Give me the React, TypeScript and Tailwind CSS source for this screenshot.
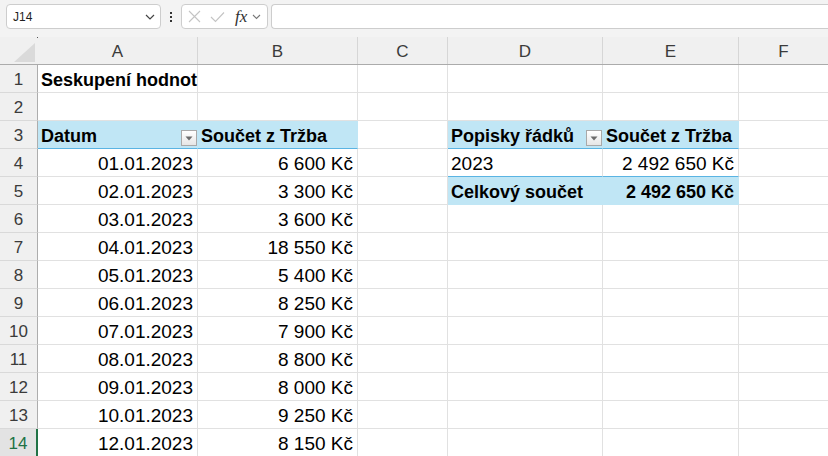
import React from "react";

type Cell = {
  text?: string;
  right?: boolean;
  bold?: boolean;
  fill?: boolean;
  blueBottom?: boolean;
  filter?: boolean;
};

const widths = ["w-[160px]", "w-[160px]", "w-[90px]", "w-[155px]", "w-[136px]", "w-[90px]"];
const letters = ["A", "B", "C", "D", "E", "F"];

const data: [string, string][] = [
  ["01.01.2023", "6\u00a0600 Kč"],
  ["02.01.2023", "3\u00a0300 Kč"],
  ["03.01.2023", "3\u00a0600 Kč"],
  ["04.01.2023", "18\u00a0550 Kč"],
  ["05.01.2023", "5\u00a0400 Kč"],
  ["06.01.2023", "8\u00a0250 Kč"],
  ["07.01.2023", "7\u00a0900 Kč"],
  ["08.01.2023", "8\u00a0800 Kč"],
  ["09.01.2023", "8\u00a0000 Kč"],
  ["10.01.2023", "9\u00a0250 Kč"],
  ["12.01.2023", "8\u00a0150 Kč"],
];

const buildRows = (): Cell[][] => {
  const rows: Cell[][] = [];
  rows.push([{ text: "Seskupení hodnot", bold: true }, {}, {}, {}, {}, {}]);
  rows.push([{}, {}, {}, {}, {}, {}]);
  rows.push([
    { text: "Datum", bold: true, fill: true, blueBottom: true, filter: true },
    { text: "Součet z Tržba", bold: true, fill: true, blueBottom: true },
    {},
    { text: "Popisky řádků", bold: true, fill: true, blueBottom: true, filter: true },
    { text: "Součet z Tržba", bold: true, fill: true, blueBottom: true },
    {},
  ]);
  data.forEach(([d, v], i) => {
    const row: Cell[] = [{ text: d, right: true }, { text: v, right: true }, {}];
    if (i === 0) {
      row.push({ text: "2023", blueBottom: true }, { text: "2\u00a0492\u00a0650 Kč", right: true, blueBottom: true });
    } else if (i === 1) {
      row.push(
        { text: "Celkový součet", bold: true, fill: true },
        { text: "2\u00a0492\u00a0650 Kč", bold: true, right: true, fill: true }
      );
    } else {
      row.push({}, {});
    }
    row.push({});
    rows.push(row);
  });
  return rows;
};

const FilterButton = () => (
  <div className="absolute right-0 bottom-[2px] w-[16px] h-[16px] border border-[#a9a9a9] bg-gradient-to-b from-white to-[#e6e6e6] flex items-center justify-center">
    <svg width="8" height="5" viewBox="0 0 8 5">
      <path d="M0.5 0.5 L7.5 0.5 L4 4.5 Z" fill="#6b6b6b" />
    </svg>
  </div>
);

const SheetCell = ({ cell, w }: { cell: Cell; w: string }) => {
  const bg = cell.fill ? "bg-[#c0e6f5] border-r-[#c0e6f5]" : "bg-white border-r-[#e1e1e1]";
  const bottom = cell.blueBottom
    ? "border-b-[#5ab4e3]"
    : cell.fill
    ? "border-b-[#c0e6f5]"
    : "border-b-[#e1e1e1]";
  return (
    <div
      className={`${w} ${bg} ${bottom} relative shrink-0 h-full border-r border-b flex items-center pt-[3px] px-[3px] ${
        cell.right ? "justify-end pr-[4px]" : "justify-start"
      } ${cell.bold ? "font-bold text-[18px]" : "text-[19px]"} whitespace-nowrap overflow-visible text-black`}
    >
      {cell.text}
      {cell.filter && <FilterButton />}
    </div>
  );
};

const Toolbar = () => (
  <div className="h-[37px] bg-[#f3f3f3] flex items-start pt-[4px] pl-[6px]">
    <div className="w-[155px] h-[25px] shrink-0 bg-white border border-[#cdcdcd] rounded-[4px] flex items-center justify-between pl-[6px] pr-[5px]">
      <span className="text-[12px] text-[#1f1f1f]">J14</span>
      <svg width="10" height="6" viewBox="0 0 10 6">
        <path d="M1 1 L5 5 L9 1" fill="none" stroke="#444" strokeWidth="1.2" />
      </svg>
    </div>
    <div className="w-[20px] h-[25px] shrink-0 flex flex-col items-center justify-center gap-[2px]">
      <div className="w-[2px] h-[2px] bg-[#333]" />
      <div className="w-[2px] h-[2px] bg-[#333]" />
      <div className="w-[2px] h-[2px] bg-[#333]" />
    </div>
    <div className="w-[87px] h-[25px] shrink-0 bg-white border border-[#cdcdcd] rounded-[4px] flex items-center pl-[6px]">
      <svg width="13" height="13" viewBox="0 0 13 13">
        <path d="M1 1 L12 12 M12 1 L1 12" stroke="#c4c4c4" strokeWidth="1.1" />
      </svg>
      <svg className="ml-[9px]" width="15" height="12" viewBox="0 0 15 12">
        <path d="M1 6 L5.5 10.5 L14 1.5" fill="none" stroke="#c4c4c4" strokeWidth="1.1" />
      </svg>
      <span className="ml-[10px] text-[17px] italic text-[#303030] leading-none" style={{ fontFamily: '"Liberation Serif", serif' }}>
        fx
      </span>
      <svg className="ml-[5px]" width="9" height="6" viewBox="0 0 9 6">
        <path d="M1 1 L4.5 4.5 L8 1" fill="none" stroke="#777" strokeWidth="1.1" />
      </svg>
    </div>
    <div className="ml-[3px] flex-1 h-[25px] bg-white border border-r-0 border-[#cdcdcd] rounded-l-[4px]" />
  </div>
);

const ColumnHeader = () => (
  <div className="h-[28px] flex bg-[#f0f0f0] border-b border-[#ababab]">
    <div className="w-[38px] shrink-0 h-full relative">
      <svg className="absolute left-[14px] top-[6px]" width="21" height="19" viewBox="0 0 21 19">
        <path d="M21 0 L21 19 L0 19 Z" fill="#dadada" />
      </svg>
      <div className="absolute right-0 top-0 w-[1px] h-[1px] bg-[#555]" />
    </div>
    {letters.map((l, i) => (
      <div
        key={l}
        className={`${widths[i]} shrink-0 h-full border-r border-[#d6d6d6] flex items-center justify-center pt-[2px] text-[17px] text-[#3b3b3b]`}
      >
        {l}
      </div>
    ))}
  </div>
);

export default function App() {
  const rows = buildRows();
  return (
    <div
      className="w-[828px] h-[456px] overflow-hidden bg-white"
      style={{ fontFamily: '"Liberation Sans", Arial, sans-serif' }}
    >
      <Toolbar />
      <ColumnHeader />
      {rows.map((row, r) => {
        const selected = r === 13;
        return (
          <div key={r} className="h-[28px] flex">
            <div
              className={`w-[38px] shrink-0 h-full border-b border-b-[#d9d9d9] flex items-center justify-center pt-[2px] text-[17px] ${
                selected
                  ? "bg-[#e3e3e3] border-r-2 border-r-[#217346] text-[#217346]"
                  : "bg-[#f0f0f0] border-r border-r-[#adadad] text-[#3b3b3b]"
              }`}
            >
              {r + 1}
            </div>
            {row.map((cell, c) => (
              <SheetCell key={c} cell={cell} w={widths[c]} />
            ))}
          </div>
        );
      })}
    </div>
  );
}
